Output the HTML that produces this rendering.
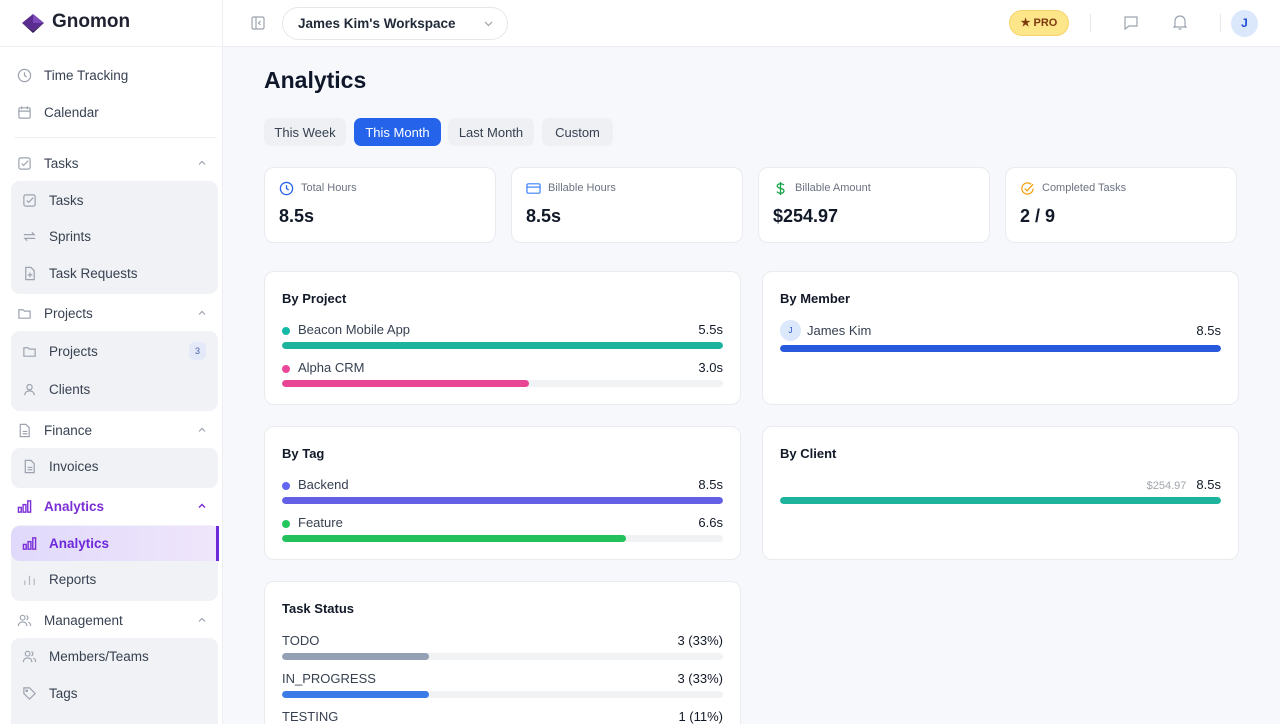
<!DOCTYPE html>
<html style="overflow:hidden;height:724px"><head><meta charset="utf-8"><style>
*{box-sizing:border-box;margin:0;padding:0}
body{width:1280px;height:724px;overflow:hidden;background:#f7f8fb;font-family:"Liberation Sans",sans-serif;color:#111827;position:relative}
.a{position:absolute}
#sb{left:0;top:0;width:223px;height:724px;background:#fff;border-right:1px solid #eceef2}
.it{position:absolute;left:11px;width:207px;height:34px;display:flex;align-items:center;font-size:13.5px;color:#374151}
.it svg{width:15px;height:15px;margin-right:12px;flex:none}
.hd{padding-left:6px}
.sub{padding-left:11px}
.grp{position:absolute;left:11px;width:207px;background:#f1f2f5;border-radius:9px}
.it svg.chev{position:absolute;right:12px;top:13px;width:8px;height:8px;margin:0}
#top{left:223px;top:0;width:1057px;height:47px;background:#fff;border-bottom:1px solid #eceef2}
.tab{position:absolute;top:118px;height:28px;border-radius:7px;background:#eef0f3;font-size:13px;color:#374151;display:flex;align-items:center;justify-content:center}
.card{position:absolute;background:#fff;border:1px solid #e9ebef;border-radius:10px}
.stat{top:167px;height:76px;width:232px}
.stat .l{position:absolute;left:36px;top:14px;font-size:11px;color:#6b7280}
.stat .v{position:absolute;left:14px;top:38px;font-size:18px;font-weight:bold}
.stat svg{position:absolute;left:14px;top:13px;width:15px;height:15px}
.pt{position:absolute;left:17px;top:19px;font-size:13px;font-weight:bold}
.row{position:absolute;left:17px;right:17px;height:20px;font-size:13px;color:#374151}
.row .n{position:absolute;left:16px;top:0}
.row .r{position:absolute;right:0;top:0;color:#111827}
.row .d{position:absolute;left:0;top:5px;width:8px;height:8px;border-radius:50%}
.bar{position:absolute;left:17px;right:17px;height:7px;border-radius:4px;background:#f1f2f4;overflow:hidden}
.bar i{display:block;height:100%;border-radius:4px}
</style></head><body>
<div id="sb" class="a">
 <div class="a" style="left:21px;top:12px;width:24px;height:22px">
  <svg width="24" height="22" viewBox="0 0 24 22"><path d="M12 2L23 11L12 19L1 11Z" fill="#5b2c8f"/><path d="M1 11L12 19L23 11L12 21Z" fill="#2d1550"/><path d="M12 2L23 11L12 11Z" fill="#7c49b8"/></svg>
 </div>
 <div class="a" style="left:52px;top:11px;font-size:19px;font-weight:bold;color:#1f2130">Gnomon</div>
 <div class="a" style="left:0;top:46px;width:222px;border-top:1px solid #f0f1f4"></div>

 <div class="it hd" style="top:58px"><svg viewBox="0 0 16 16" fill="none" stroke="#9ca3af" stroke-width="1.3"><circle cx="8" cy="8" r="6.5"/><path d="M8 4.5V8l2.3 1.5"/></svg>Time Tracking</div>
 <div class="it hd" style="top:95px"><svg viewBox="0 0 16 16" fill="none" stroke="#9ca3af" stroke-width="1.3"><rect x="2" y="3" width="12" height="11" rx="1.5"/><path d="M2 6.5h12M5 1.5v3M11 1.5v3"/></svg>Calendar</div>
 <div class="a" style="left:14px;top:137px;width:203px;border-top:1px solid #f0f1f4"></div>

 <div class="it hd" style="top:146px"><svg viewBox="0 0 16 16" fill="none" stroke="#9ca3af" stroke-width="1.3"><rect x="2" y="2" width="12" height="12" rx="2"/><path d="M5 8l2 2 5-5"/></svg>Tasks<svg class="chev" viewBox="0 0 8 8" fill="none" stroke="#9ca3af" stroke-width="1.2"><path d="M1 5.5l3-3 3 3"/></svg></div>
 <div class="grp" style="top:181px;height:113px"></div>
 <div class="it sub" style="top:183px"><svg viewBox="0 0 16 16" fill="none" stroke="#9ca3af" stroke-width="1.3"><rect x="2" y="2" width="12" height="12" rx="2"/><path d="M5 8l2 2 5-5"/></svg>Tasks</div>
 <div class="it sub" style="top:219px"><svg viewBox="0 0 16 16" fill="none" stroke="#9ca3af" stroke-width="1.3"><path d="M2 6h11l-2.5-2.5M14 10H3l2.5 2.5"/></svg>Sprints</div>
 <div class="it sub" style="top:256px"><svg viewBox="0 0 16 16" fill="none" stroke="#9ca3af" stroke-width="1.3"><path d="M4 1.5h5.5L13 5v9.5H4z"/><path d="M8.5 7v5M6 9.5h5"/></svg>Task Requests</div>

 <div class="it hd" style="top:296px"><svg viewBox="0 0 16 16" fill="none" stroke="#9ca3af" stroke-width="1.3"><path d="M2 4h4.5l1.5 1.5h6v7.5H2z"/></svg>Projects<svg class="chev" viewBox="0 0 8 8" fill="none" stroke="#9ca3af" stroke-width="1.2"><path d="M1 5.5l3-3 3 3"/></svg></div>
 <div class="grp" style="top:331px;height:80px"></div>
 <div class="it sub" style="top:334px"><svg viewBox="0 0 16 16" fill="none" stroke="#9ca3af" stroke-width="1.3"><path d="M2 4h4.5l1.5 1.5h6v7.5H2z"/></svg>Projects<span class="a" style="right:12px;top:8px;width:17px;height:18px;border-radius:6px;background:#e3e9f8;color:#4b5fa8;font-size:9px;text-align:center;line-height:18px">3</span></div>
 <div class="it sub" style="top:372px"><svg viewBox="0 0 16 16" fill="none" stroke="#9ca3af" stroke-width="1.3"><circle cx="8" cy="5.5" r="2.8"/><path d="M3 14c0-3 2.2-4.5 5-4.5s5 1.5 5 4.5"/></svg>Clients</div>

 <div class="it hd" style="top:413px"><svg viewBox="0 0 16 16" fill="none" stroke="#9ca3af" stroke-width="1.3"><path d="M3.5 1.5h6L13 5v9.5H3.5z"/><path d="M6 9h5M6 11.5h5"/></svg>Finance<svg class="chev" viewBox="0 0 8 8" fill="none" stroke="#9ca3af" stroke-width="1.2"><path d="M1 5.5l3-3 3 3"/></svg></div>
 <div class="grp" style="top:448px;height:40px"></div>
 <div class="it sub" style="top:449px"><svg viewBox="0 0 16 16" fill="none" stroke="#9ca3af" stroke-width="1.3"><path d="M3.5 1.5h6L13 5v9.5H3.5z"/><path d="M6 9h5M6 11.5h5"/></svg>Invoices</div>

 <div class="it hd" style="top:489px;color:#7c2fd6;font-weight:bold"><svg viewBox="0 0 16 16" fill="none" stroke="#7c2fd6" stroke-width="1.5"><rect x="1.5" y="9" width="3" height="5"/><rect x="6.5" y="6" width="3" height="8"/><rect x="11.5" y="2" width="3" height="12"/></svg>Analytics<svg class="chev" viewBox="0 0 8 8" fill="none" stroke="#7c2fd6" stroke-width="1.5"><path d="M1 5.5l3-3 3 3"/></svg></div>
 <div class="grp" style="top:525px;height:76px"></div>
 <div class="a" style="left:11px;top:526px;width:208px;height:35px;background:linear-gradient(90deg,#e0d9fb,#efe6fb);border-right:3px solid #6d28d9;border-radius:9px 0 0 9px"></div>
 <div class="it sub" style="top:526px;color:#6d28d9;font-weight:bold"><svg viewBox="0 0 16 16" fill="none" stroke="#7c2fd6" stroke-width="1.5"><rect x="1.5" y="9" width="3" height="5"/><rect x="6.5" y="6" width="3" height="8"/><rect x="11.5" y="2" width="3" height="12"/></svg>Analytics</div>
 <div class="it sub" style="top:562px"><svg viewBox="0 0 16 16" fill="none" stroke="#b0b5bd" stroke-width="1.2"><path d="M3 14V9M8 14V4M13 14V7"/></svg>Reports</div>

 <div class="it hd" style="top:603px"><svg viewBox="0 0 16 16" fill="none" stroke="#9ca3af" stroke-width="1.2"><circle cx="6" cy="5" r="2.5"/><path d="M1.5 14c0-3 2-4.5 4.5-4.5s4.5 1.5 4.5 4.5M10 2.8a2.3 2.3 0 010 4.4M12 9.8c1.6.5 2.5 2 2.5 4"/></svg>Management<svg class="chev" viewBox="0 0 8 8" fill="none" stroke="#9ca3af" stroke-width="1.2"><path d="M1 5.5l3-3 3 3"/></svg></div>
 <div class="grp" style="top:638px;height:86px;border-radius:9px 9px 0 0"></div>
 <div class="it sub" style="top:639px"><svg viewBox="0 0 16 16" fill="none" stroke="#9ca3af" stroke-width="1.2"><circle cx="6" cy="5" r="2.5"/><path d="M1.5 14c0-3 2-4.5 4.5-4.5s4.5 1.5 4.5 4.5M10 2.8a2.3 2.3 0 010 4.4M12 9.8c1.6.5 2.5 2 2.5 4"/></svg>Members/Teams</div>
 <div class="it sub" style="top:676px"><svg viewBox="0 0 16 16" fill="none" stroke="#9ca3af" stroke-width="1.3"><path d="M2 2h6l6 6-6 6-6-6z"/><circle cx="5" cy="5" r="0.8"/></svg>Tags</div>
</div>

<div id="top" class="a">
 <svg class="a" style="left:28px;top:16px" width="14" height="14" viewBox="0 0 14 14" fill="none" stroke="#9ca3af" stroke-width="1.2"><rect x="1" y="1" width="12" height="12" rx="1.5"/><path d="M5 1v12M9.5 5L7.5 7l2 2"/></svg>
 <div class="a" style="left:59px;top:7px;width:226px;height:33px;border:1px solid #e5e7eb;border-radius:17px;font-size:13.5px;font-weight:bold;color:#1f2937;padding:8px 0 0 15px">James Kim's Workspace
  <svg class="a" style="right:14px;top:13px" width="9" height="6" viewBox="0 0 9 6" fill="none" stroke="#9ca3af" stroke-width="1.2"><path d="M1 1l3.5 3.5L8 1"/></svg></div>
 <div class="a" style="left:786px;top:10px;width:60px;height:26px;border-radius:13px;background:#fde68a;border:1px solid #f5d36a;color:#7c3a0e;font-size:11px;font-weight:bold;text-align:center;line-height:24px">★ PRO</div>
 <div class="a" style="left:867px;top:14px;height:18px;border-left:1px solid #e5e7eb"></div>
 <svg class="a" style="left:900px;top:15px" width="16" height="16" viewBox="0 0 16 16" fill="none" stroke="#9ca3af" stroke-width="1.2"><path d="M2 2h12v9H6l-4 3z"/></svg>
 <svg class="a" style="left:949px;top:14px" width="16" height="17" viewBox="0 0 16 17" fill="none" stroke="#9ca3af" stroke-width="1.2"><path d="M3 12V7a5 5 0 0110 0v5l1 1H2z M6.5 15h3"/></svg>
 <div class="a" style="left:997px;top:14px;height:18px;border-left:1px solid #e5e7eb"></div>
 <div class="a" style="left:1008px;top:10px;width:27px;height:27px;border-radius:50%;background:#dbe7fb;color:#1d4ed8;font-size:12px;font-weight:bold;text-align:center;line-height:27px">J</div>
</div>

<div class="a" style="left:264px;top:67px;font-size:23px;font-weight:bold;color:#0f172a">Analytics</div>
<div class="tab" style="left:264px;width:82px">This Week</div>
<div class="tab" style="left:354px;width:87px;background:#2563eb;color:#fff">This Month</div>
<div class="tab" style="left:448px;width:86px">Last Month</div>
<div class="tab" style="left:542px;width:71px">Custom</div>

<div class="card stat" style="left:264px"><svg viewBox="0 0 16 16" fill="none" stroke="#2563eb" stroke-width="1.4"><circle cx="8" cy="8" r="6.5"/><path d="M8 4.5V8l2.3 1.5"/></svg><div class="l">Total Hours</div><div class="v">8.5s</div></div>
<div class="card stat" style="left:511px"><svg viewBox="0 0 16 16" fill="none" stroke="#3b82f6" stroke-width="1.3"><rect x="1" y="3" width="14" height="10" rx="1.5"/><path d="M1 6.5h14"/></svg><div class="l">Billable Hours</div><div class="v">8.5s</div></div>
<div class="card stat" style="left:758px"><svg viewBox="0 0 16 16" fill="none" stroke="#16a34a" stroke-width="1.4"><path d="M8 1v14M11.5 4.5C11 3.5 9.8 3 8 3S4.5 3.8 4.5 5.3 6 7.3 8 7.8s3.7 1 3.7 2.7S10 13 8 13s-3.2-.7-3.7-1.8"/></svg><div class="l">Billable Amount</div><div class="v">$254.97</div></div>
<div class="card stat" style="left:1005px"><svg viewBox="0 0 16 16" fill="none" stroke="#f59e0b" stroke-width="1.3"><path d="M14 8a6 6 0 11-2-4.5"/><path d="M5 8l2.5 2.5L14 3.5"/></svg><div class="l">Completed Tasks</div><div class="v">2 / 9</div></div>

<div class="card" style="left:264px;top:271px;width:477px;height:134px">
 <div class="pt">By Project</div>
 <div class="row" style="top:50px"><span class="d" style="background:#14b8a6"></span><span class="n">Beacon Mobile App</span><span class="r">5.5s</span></div>
 <div class="bar" style="top:70px"><i style="width:100%;background:#1db39c"></i></div>
 <div class="row" style="top:88px"><span class="d" style="background:#ec4899"></span><span class="n">Alpha CRM</span><span class="r">3.0s</span></div>
 <div class="bar" style="top:108px"><i style="width:56%;background:#e84694"></i></div>
</div>
<div class="card" style="left:762px;top:271px;width:477px;height:134px">
 <div class="pt">By Member</div>
 <div class="row" style="top:51px"><span class="a" style="left:0;top:-3px;width:21px;height:21px;border-radius:50%;background:#dbe7fb;color:#1d4ed8;font-size:8px;text-align:center;line-height:21px">J</span><span class="n" style="left:27px">James Kim</span><span class="r">8.5s</span></div>
 <div class="bar" style="top:73px"><i style="width:100%;background:#2859dc"></i></div>
</div>
<div class="card" style="left:264px;top:426px;width:477px;height:134px">
 <div class="pt">By Tag</div>
 <div class="row" style="top:50px"><span class="d" style="background:#6366f1"></span><span class="n">Backend</span><span class="r">8.5s</span></div>
 <div class="bar" style="top:70px"><i style="width:100%;background:#6360e6"></i></div>
 <div class="row" style="top:88px"><span class="d" style="background:#22c55e"></span><span class="n">Feature</span><span class="r">6.6s</span></div>
 <div class="bar" style="top:108px"><i style="width:78%;background:#22c15c"></i></div>
</div>
<div class="card" style="left:762px;top:426px;width:477px;height:134px">
 <div class="pt">By Client</div>
 <div class="row" style="top:50px"><span class="r"><span style="color:#a0a5ad;font-size:11px;margin-right:10px">$254.97</span>8.5s</span></div>
 <div class="bar" style="top:70px"><i style="width:100%;background:#1db39c"></i></div>
</div>
<div class="card" style="left:264px;top:581px;width:477px;height:160px">
 <div class="pt">Task Status</div>
 <div class="row" style="top:51px"><span class="n" style="left:0">TODO</span><span class="r">3 (33%)</span></div>
 <div class="bar" style="top:71px"><i style="width:33.3%;background:#94a0b4"></i></div>
 <div class="row" style="top:89px"><span class="n" style="left:0">IN_PROGRESS</span><span class="r">3 (33%)</span></div>
 <div class="bar" style="top:109px"><i style="width:33.3%;background:#3b7be8"></i></div>
 <div class="row" style="top:127px"><span class="n" style="left:0">TESTING</span><span class="r">1 (11%)</span></div>
</div>
</body></html>
